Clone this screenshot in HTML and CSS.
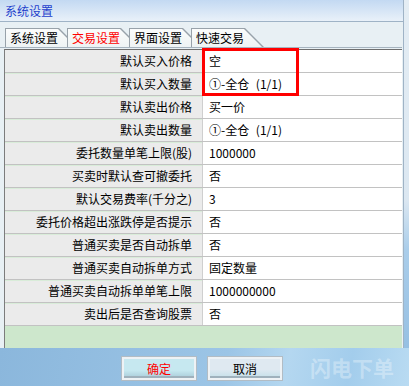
FILE: index.html
```html
<!DOCTYPE html>
<html lang="zh-CN">
<head>
  <meta charset="UTF-8" />
  <title>系统设置</title>
  <link rel="stylesheet" href="styles.css">
</head>
<body>

<div class="dialog">
  <div class="titlebar">系统设置</div>

  <div class="panel">
    <div class="tabs">
      <div class="tab"><span>系统设置</span></div>
      <div class="tab active"><span>交易设置</span></div>
      <div class="tab"><span>界面设置</span></div>
      <div class="tab"><span>快速交易</span></div>
    </div>

    <div class="grid">
      <div class="row"><div class="label">默认买入价格</div><div class="value">空</div></div>
      <div class="row"><div class="label">默认买入数量</div><div class="value wide">①-全仓 (1/1)</div></div>
      <div class="row"><div class="label">默认卖出价格</div><div class="value">买一价</div></div>
      <div class="row"><div class="label">默认卖出数量</div><div class="value wide">①-全仓 (1/1)</div></div>
      <div class="row"><div class="label">委托数量单笔上限(股)</div><div class="value">1000000</div></div>
      <div class="row"><div class="label">买卖时默认查可撤委托</div><div class="value">否</div></div>
      <div class="row"><div class="label">默认交易费率(千分之)</div><div class="value">3</div></div>
      <div class="row"><div class="label">委托价格超出涨跌停是否提示</div><div class="value">否</div></div>
      <div class="row"><div class="label">普通买卖是否自动拆单</div><div class="value">否</div></div>
      <div class="row"><div class="label">普通买卖自动拆单方式</div><div class="value">固定数量</div></div>
      <div class="row"><div class="label">普通买卖自动拆单单笔上限</div><div class="value">1000000000</div></div>
      <div class="row"><div class="label">卖出后是否查询股票</div><div class="value">否</div></div>
      <div class="grid-fill"></div>

      <!-- highlight box drawn over the first two values -->
      <div class="mark"></div>
    </div>
  </div>
</div>

<div class="actions">
  <button class="btn ok">确定</button>
  <button class="btn cancel">取消</button>
  <div class="watermark">闪电下单</div>
</div>

</body>
</html>
```

FILE: styles.css
```css
body {
  margin: 0;
  width: 409px;
  height: 386px;
  overflow: hidden;
  font-family: "Noto Sans CJK SC", "Noto Sans", sans-serif;
  font-size: 12px;
  color: #000;
  background: linear-gradient(180deg, #e4edf4 0, #dbe7f1 200px, #a9cdea 250px, #8fbbe0 100%);
}

.dialog {
  width: 403px;
  height: 348px;
  border-right: 1px solid #9fb3c6;
  background: #e8f0f4;
}

.titlebar {
  height: 21px;
  line-height: 21px;
  padding-left: 5px;
  color: #1e3fcc;
  font-size: 12px;
  border-bottom: 1px solid #9fb3c6;
  background: linear-gradient(180deg, #c3d9f2, #e9f1f9);
}

.panel {
  padding-top: 6px;
}

/* tabs */
.tabs {
  display: flex;
  height: 19px;
  padding-left: 5px;
  margin-right: 1px;
  border-bottom: 1px solid #a6b4bf;
}

.tab {
  position: relative;
  width: 73px;
  height: 19px;
  margin-right: -11px;
  background: #98a2aa;
  clip-path: polygon(0 0, calc(100% - 19px) 0, 100% 19px, 0 19px);
}

.tab span {
  position: absolute;
  left: 1px;
  top: 1px;
  right: 1px;
  bottom: 0;
  padding-left: 4px;
  line-height: 18px;
  background: linear-gradient(180deg, #fbfcfc, #eef3f4);
  clip-path: polygon(0 0, calc(100% - 19px) 0, 100% 19px, 0 19px);
}

.tab.active span {
  color: #f00;
}

/* property grid */
.grid {
  position: relative;
  width: 397px;
  margin: 1px 0 0 4px;
  border-left: 1px solid #7c7c7c;
  border-top: 1px solid #6e6e6e;
}

.row {
  display: flex;
  height: 22px;
  border-bottom: 1px solid #c2c2c2;
}

.label {
  width: 187px;
  padding-right: 10px;
  text-align: right;
  line-height: 22px;
  background: #ebebeb;
  border-right: 1px solid #cfcfcf;
  box-shadow: inset 0 1px 0 #d9ecd9;
}

.row:first-child .label {
  box-shadow: none;
}

.value {
  flex: 1;
  padding-left: 6px;
  line-height: 22px;
  background: #fff;
}

.value.wide {
  word-spacing: 4px;
}

.grid-fill {
  height: 22px;
  background: #cde7cc;
}

.mark {
  position: absolute;
  left: 197px;
  top: -2px;
  width: 97px;
  height: 48px;
  box-sizing: border-box;
  border: 3px solid #f00;
}

/* bottom buttons */
.actions {
  display: flex;
  align-items: center;
  height: 38px;
  padding-left: 122px;
  gap: 12px;
  background: linear-gradient(100deg, #8bb7dc 0, #9cc5e6 55%, #b4d7f0 70%, #a3cdec 85%, #b9dbf2 100%);
}

.btn {
  width: 74px;
  height: 23px;
  margin-top: 2px;
  padding: 0;
  font-family: inherit;
  font-size: 12px;
  border: 2px solid #eef2f5;
  outline: 1px solid #b2bcc4;
  box-shadow: inset 0 -2px 0 #9fb1bc;
  cursor: pointer;
}

.btn.ok {
  color: #f00;
  background: linear-gradient(180deg, #c6e8f0 0, #c6e8f0 60%, #a9cbd8 100%);
}

.btn.cancel {
  color: #000;
  background: linear-gradient(180deg, #dfe9f1 0, #dfe9f1 55%, #c4dfe8 100%);
}

.watermark {
  margin-left: 16px;
  font-size: 21px;
  font-weight: bold;
  color: rgba(255, 255, 255, 0.32);
}
```
